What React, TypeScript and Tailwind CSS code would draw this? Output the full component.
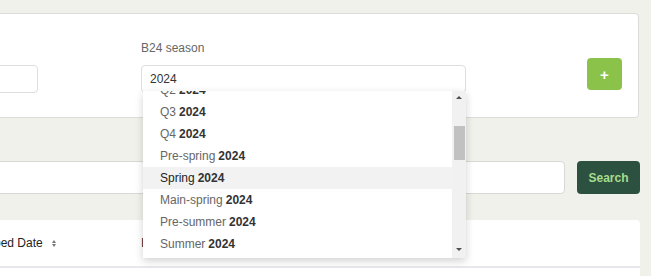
import React from "react";

const options = [
  { label: "Q2", bold: "2024" },
  { label: "Q3", bold: "2024" },
  { label: "Q4", bold: "2024" },
  { label: "Pre-spring", bold: "2024" },
  { label: "Spring", bold: "2024", active: true },
  { label: "Main-spring", bold: "2024" },
  { label: "Pre-summer", bold: "2024" },
  { label: "Summer", bold: "2024" },
];

function SeasonDropdown() {
  return (
    <div className="absolute left-[2px] top-[51px] z-10 flex h-[167px] w-[323px] overflow-hidden bg-white shadow-[0_3px_8px_rgba(0,0,0,0.18)]">
      <div className="flex-1 overflow-hidden">
        <div className="-mt-[12px]">
          {options.map((o) => (
            <div
              key={o.label}
              className={`flex h-[22px] items-center pl-[17px] text-[12px] ${o.active ? "bg-[#f2f2f2] text-[#222]" : "text-[#666]"}`}
            >
              <span>{o.label}</span>
              <span className="ml-[3px] font-semibold text-[#333]">{o.bold}</span>
            </div>
          ))}
        </div>
      </div>
      <div className="flex w-[14px] flex-col items-center bg-[#f1f1f1]">
        <div className="mt-[5px] h-0 w-0 border-x-[3.5px] border-b-[3.5px] border-x-transparent border-b-[#505050]" />
        <div className="mt-[27px] h-[34px] w-[11px] bg-[#c1c1c1]" />
        <div className="mt-auto mb-[7px] h-0 w-0 border-x-[3.5px] border-t-[3.5px] border-x-transparent border-t-[#505050]" />
      </div>
    </div>
  );
}

export default function App() {
  return (
    <div className="h-[276px] w-[651px] overflow-hidden bg-[#f1f1ec] font-['Liberation_Sans',Arial,sans-serif]">
      <div className="-ml-[40px] w-[680px] pt-[13px]">
        {/* filter card */}
        <div className="flex h-[105px] w-[679px] items-start rounded-[4px] border border-[#dcdcd8] bg-white pt-[26px]">
          <div className="ml-[9px] w-[68px]">
            <div className="h-[16px]" />
            <div className="mt-[9px] h-[28px] rounded-[4px] border border-[#dedede]" />
          </div>
          <div className="relative ml-[103px] w-[325px]">
            <div className="h-[16px] text-[12px] leading-[16px] text-[#666]">B24 season</div>
            <div className="mt-[9px] flex h-[28px] items-center rounded-[4px] border border-[#dedede] pl-[8px] text-[12px] text-[#333]">
              2024
            </div>
            <SeasonDropdown />
          </div>
          <button className="ml-[121px] mt-[18px] flex h-[32px] w-[35px] items-center justify-center rounded-[4px] bg-[#8bc34a] text-[15px] font-bold leading-none text-white">
            +
          </button>
        </div>

        {/* search row */}
        <div className="mt-[43px] flex">
          <div className="h-[33px] flex-1 rounded-[4px] border border-[#d8d8d4] bg-white" />
          <button className="ml-[12px] h-[33px] w-[63px] rounded-[4px] bg-[#2c5140] text-[12px] font-bold text-[#a6dc8c]">
            Search
          </button>
        </div>

        {/* table */}
        <div className="mt-[26px] rounded-t-[4px] bg-white">
          <div className="flex h-[48px] items-center border-b-2 border-[#e6e8eb] text-[12px] text-[#222]">
            <div className="ml-[10px] flex w-[171px] items-center">
              <span>Shipped Date</span>
              <span className="ml-[9px] flex flex-col items-center gap-[1px]">
                <span className="h-0 w-0 border-x-[2.5px] border-b-[3px] border-x-transparent border-b-[#777]" />
                <span className="h-0 w-0 border-x-[2.5px] border-t-[3px] border-x-transparent border-t-[#777]" />
              </span>
            </div>
            <div>Invoice Date</div>
          </div>
          <div className="h-[20px]" />
        </div>
      </div>
    </div>
  );
}
